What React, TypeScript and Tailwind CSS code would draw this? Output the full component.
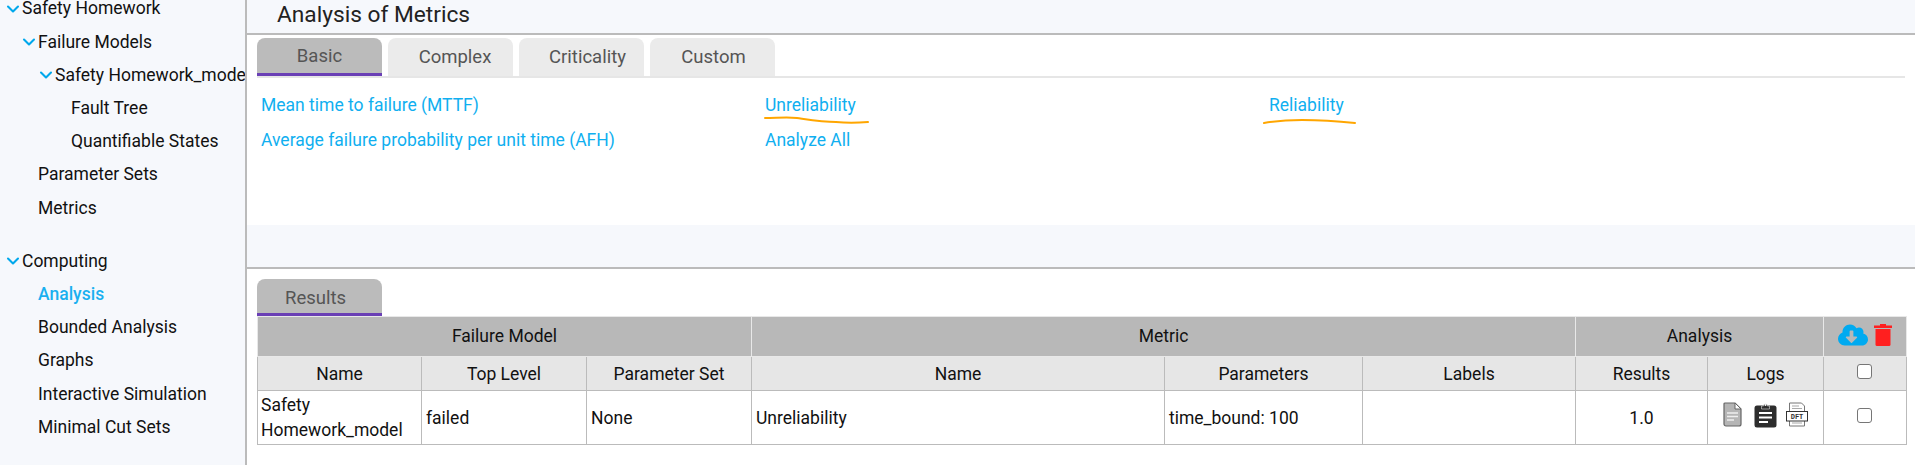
import { FaCloudDownloadAlt } from 'react-icons/fa';
import { ChevronDown } from 'lucide-react';

const tabs = [
  { label: 'Basic', className: 'border-b-[3px] border-[#6a3fb5] bg-[#bbbbbb]' },
  { label: 'Complex', className: 'bg-[#ebebeb] pl-[9px]' },
  { label: 'Criticality', className: 'bg-[#ebebeb] pl-[12px]' },
  { label: 'Custom', className: 'bg-[#ebebeb] pl-[2px]' },
];

function TreeRow({ label, indent, open, active }: { label: string; indent: string; open?: boolean; active?: boolean }) {
  return (
    <div className={`relative flex h-[33.2px] items-center whitespace-nowrap ${indent}`}>
      {open && <ChevronDown className="-mr-[1px] -ml-[19px] h-[20px] w-[20px] shrink-0 text-[#00a8ec]" strokeWidth={2.5} />}
      <span className={active ? 'font-medium text-[#1ab0f0]' : ''}>{label}</span>
    </div>
  );
}

function FileIcon() {
  return (
    <svg width="19" height="25" viewBox="0 0 19 25">
      <path d="M2 1h10l6 6v15a2 2 0 0 1-2 2H3a2 2 0 0 1-2-2V2a1 1 0 0 1 1-1z" fill="#b5b5b5" stroke="#666" strokeWidth="1.2" />
      <path d="M12 1v6h6z" fill="#fff" stroke="#666" strokeWidth="1" />
      <path d="M4 11h11M4 14.5h11M4 18h7" stroke="#eee" strokeWidth="1.4" />
    </svg>
  );
}

function ClipboardIcon() {
  return (
    <svg width="23" height="26" viewBox="0 0 23 26">
      <rect x="0.5" y="3.5" width="22" height="22" rx="2.5" fill="#2d2d2d" />
      <path d="M7.5 7V4h2a2 2 0 0 1 4 0h2v3z" fill="#2d2d2d" stroke="#ddd" strokeWidth="0.6" />
      <circle cx="11.5" cy="3" r="0.9" fill="#fff" />
      <path d="M5 11h13M5 15.5h13M5 20h9" stroke="#fff" strokeWidth="2.2" />
    </svg>
  );
}

function DftIcon() {
  return (
    <svg width="22" height="25" viewBox="0 0 22 25">
      <path d="M3.5 9V1h12l3 3v5M3.5 19v5h15v-5" fill="#fff" stroke="#777" strokeWidth="1" />
      <path d="M6 4h7M6 6.5h10M6 21h10" stroke="#aaa" strokeWidth="1.2" />
      <rect x="0.5" y="9.5" width="21" height="9.5" fill="#fff" stroke="#333" strokeWidth="1" />
      <text x="11" y="17" textAnchor="middle" fontFamily="Liberation Mono, monospace" fontWeight="700" fontSize="7" fill="#333">DFT</text>
    </svg>
  );
}

function TrashIcon() {
  return (
    <svg width="18" height="22" viewBox="0 0 18 22" fill="#ff1f1f">
      <path d="M6 0h6v1.5h6v2.5H0V1.5h6z" />
      <path d="M1.5 5h15v15.5a1.5 1.5 0 0 1-1.5 1.5H3a1.5 1.5 0 0 1-1.5-1.5z" />
    </svg>
  );
}

function Check() {
  return <span className="mr-[2px] mb-[6px] inline-block h-[15px] w-[15px] rounded-[3px] border-[1.5px] border-[#767676] bg-white align-middle" />;
}

export default function App() {
  return (
    <div className="flex h-[465px] w-[1915px] overflow-hidden bg-white font-['Roboto',sans-serif] text-[17.5px] text-[#111]">
      <aside className="w-[247px] shrink-0 overflow-hidden border-r-2 border-[#bbbbbb] bg-[#f6f8fc]">
        <div className="-mt-[8px]">
          <TreeRow label="Safety Homework" indent="pl-[22px]" open />
          <TreeRow label="Failure Models" indent="pl-[38px]" open />
          <TreeRow label="Safety Homework_model" indent="pl-[55px]" open />
          <TreeRow label="Fault Tree" indent="pl-[71px]" />
          <TreeRow label="Quantifiable States" indent="pl-[71px]" />
          <TreeRow label="Parameter Sets" indent="pl-[38px]" />
          <TreeRow label="Metrics" indent="pl-[38px]" />
          <div className="h-[20px]" />
          <TreeRow label="Computing" indent="pl-[22px]" open />
          <TreeRow label="Analysis" indent="pl-[38px]" active />
          <TreeRow label="Bounded Analysis" indent="pl-[38px]" />
          <TreeRow label="Graphs" indent="pl-[38px]" />
          <TreeRow label="Interactive Simulation" indent="pl-[38px]" />
          <TreeRow label="Minimal Cut Sets" indent="pl-[38px]" />
        </div>
      </aside>

      <main className="flex min-w-0 flex-1 flex-col">
        <header className="flex h-[35px] shrink-0 items-center border-b-2 border-[#bbbbbb] bg-[#f6f8fc] pb-[2px] pl-[30px] text-[22.7px] text-[#222]">
          Analysis of Metrics
        </header>

        <section className="h-[190px] shrink-0 px-[10px] pt-[3px]">
          <div className="flex h-[40px] gap-[6px] border-b-2 border-[#e6e6e6] text-[18.5px]">
            {tabs.map((t) => (
              <div
                key={t.label}
                className={`flex h-[38px] w-[125px] items-center justify-center rounded-t-lg pt-[2px] text-[#555] ${t.className}`}
              >
                {t.label}
              </div>
            ))}
          </div>
          <div className="grid grid-cols-[504px_504px_1fr] pt-[10px] pl-[4px] text-[#10aff0]">
            <div className="h-[35px] leading-[35px]">Mean time to failure (MTTF)</div>
            <div className="relative h-[35px] leading-[35px]">
              Unreliability
              <svg className="absolute top-[27px] -left-[1px]" width="106" height="10" viewBox="0 0 106 10">
                <path d="M1 3C12 3 24 2 33 3c14 2 26 4 39 4 10 1 20 1 32 0" fill="none" stroke="#ffa600" strokeWidth="2" strokeLinecap="round" />
              </svg>
            </div>
            <div className="relative h-[35px] leading-[35px]">
              Reliability
              <svg className="absolute top-[29px] -left-[6px]" width="94" height="8" viewBox="0 0 94 8">
                <path d="M1 6c12-2 24-3 38-3 14 0 34 1 53 3" fill="none" stroke="#ffa600" strokeWidth="2" strokeLinecap="round" />
              </svg>
            </div>
            <div className="h-[35px] leading-[35px]">Average failure probability per unit time (AFH)</div>
            <div className="h-[35px] leading-[35px]">Analyze All</div>
          </div>
        </section>

        <div className="h-[44px] shrink-0 border-b-2 border-[#bbbbbb] bg-[#f6f8fc]" />

        <section className="flex-1 px-[10px] pt-[10px]">
          <div className="flex h-[37px] w-[125px] items-center rounded-t-lg border-b-[3px] border-[#6a3fb5] bg-[#bbbbbb] pt-[6px] pl-[28px] text-[18.5px] text-[#555]">
            Results
          </div>
          <table className="w-[1649px] table-fixed border-collapse text-center">
            <colgroup>
              <col className="w-[164px]" />
              <col className="w-[165px]" />
              <col className="w-[165px]" />
              <col className="w-[413px]" />
              <col className="w-[198px]" />
              <col className="w-[213px]" />
              <col className="w-[132px]" />
              <col className="w-[116px]" />
              <col className="w-[83px]" />
            </colgroup>
            <thead>
              <tr className="h-[40px] bg-[#b8b8b8]">
                <th colSpan={3} className="border border-[#e8e8e8] font-normal">Failure Model</th>
                <th colSpan={3} className="border border-[#e8e8e8] font-normal">Metric</th>
                <th colSpan={2} className="border border-[#e8e8e8] font-normal">Analysis</th>
                <th className="border border-[#e8e8e8]">
                  <div className="flex items-center justify-center gap-[6px] pb-[3px]">
                    <FaCloudDownloadAlt className="h-[26px] w-[30px] text-[#00aaf0]" />
                    <TrashIcon />
                  </div>
                </th>
              </tr>
              <tr className="h-[34px] bg-[#e6e6e6]">
                {['Name', 'Top Level', 'Parameter Set', 'Name', 'Parameters', 'Labels', 'Results', 'Logs'].map((h, i) => (
                  <th key={i} className="border border-[#bbbbbb] pt-[1px] font-normal">{h}</th>
                ))}
                <th className="border border-[#bbbbbb]"><Check /></th>
              </tr>
            </thead>
            <tbody>
              <tr className="h-[54px]">
                <td className="border border-[#bbbbbb] px-[3px] pt-[1px] text-left leading-[25px]">Safety Homework_model</td>
                <td className="border border-[#bbbbbb] px-[4px] pt-[1px] text-left">failed</td>
                <td className="border border-[#bbbbbb] px-[4px] pt-[1px] text-left">None</td>
                <td className="border border-[#bbbbbb] px-[4px] pt-[1px] text-left">Unreliability</td>
                <td className="border border-[#bbbbbb] px-[4px] pt-[1px] text-left">time_bound: 100</td>
                <td className="border border-[#bbbbbb]" />
                <td className="border border-[#bbbbbb] pt-[1px]">1.0</td>
                <td className="border border-[#bbbbbb]">
                  <div className="flex items-center justify-center pb-[6px]">
                    <FileIcon />
                    <span className="w-[12px]" />
                    <ClipboardIcon />
                    <span className="w-[9px]" />
                    <DftIcon />
                  </div>
                </td>
                <td className="border border-[#bbbbbb]"><Check /></td>
              </tr>
            </tbody>
          </table>
        </section>
      </main>
    </div>
  );
}
